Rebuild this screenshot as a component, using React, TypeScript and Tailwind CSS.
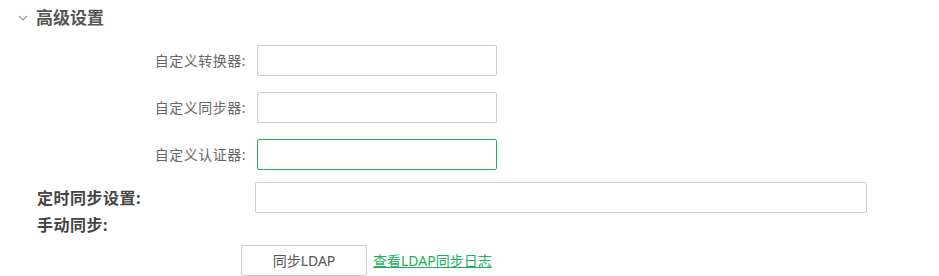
import React from "react";

const font = { fontFamily: '"Noto Sans", "Noto Sans CJK SC", sans-serif' };

function Field({ label, focused }: { label: string; focused?: boolean }) {
  return (
    <div className="flex items-center">
      <div className="w-[246px] text-right text-[14px] leading-[20px] tracking-[0.5px] text-[#666]">{label}</div>
      <input
        className={
          "ml-[11px] h-[31px] w-[240px] rounded-[2px] border bg-white outline-none " +
          (focused ? "border-[#27ae60]" : "border-[#cccccc]")
        }
      />
    </div>
  );
}

export default function App() {
  return (
    <div className="w-[939px] h-[276px] bg-white overflow-hidden" style={font}>
      <div className="flex h-[35px] items-center">
        <svg className="ml-[18px]" width="10" height="6" viewBox="0 0 10 6">
          <path d="M1 1 L5 5 L9 1" fill="none" stroke="#999" strokeWidth="1.1" />
        </svg>
        <span className="ml-[8px] text-[17px] font-bold text-[#555]">高级设置</span>
      </div>
      <div className="mt-[10px] flex flex-col gap-[16px]">
        <Field label="自定义转换器:" />
        <Field label="自定义同步器:" />
        <Field label="自定义认证器:" focused />
      </div>
      <div className="mt-[12px] flex items-center">
        <div className="ml-[37px] w-[218px] text-[16px] font-bold tracking-[0.5px] text-[#444]">定时同步设置:</div>
        <input className="h-[31px] w-[612px] rounded-[2px] border border-[#cccccc] bg-white outline-none" />
      </div>
      <div className="ml-[37px] h-[25px] text-[16px] font-bold leading-[25px] tracking-[0.5px] text-[#444]">手动同步:</div>
      <div className="mt-[7px] flex items-center">
        <button className="ml-[241px] h-[31px] w-[126px] rounded-[2px] border border-[#cccccc] bg-white text-[14px] text-[#555]">
          同步LDAP
        </button>
        <a href="#" className="ml-[6px] text-[14px] text-[#20b05c] underline">
          查看LDAP同步日志
        </a>
      </div>
    </div>
  );
}
